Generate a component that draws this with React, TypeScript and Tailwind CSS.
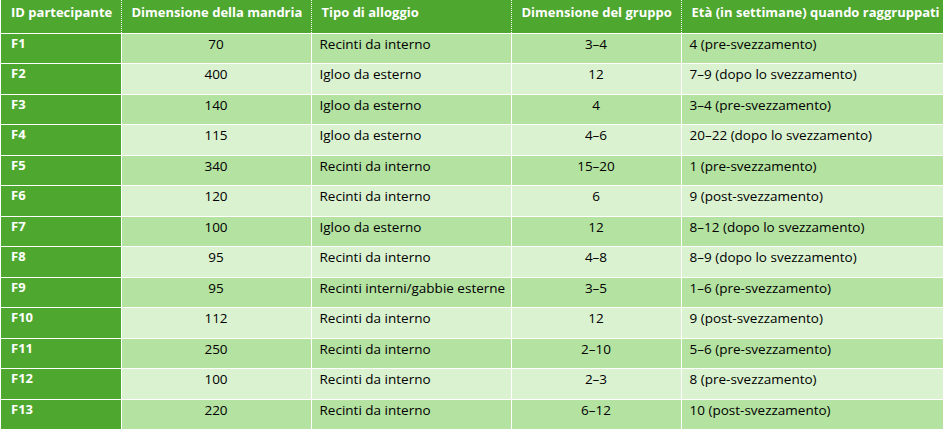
const rows = [
  ['F1', '70', 'Recinti da interno', '3–4', '4 (pre-svezzamento)'],
  ['F2', '400', 'Igloo da esterno', '12', '7–9 (dopo lo svezzamento)'],
  ['F3', '140', 'Igloo da esterno', '4', '3–4 (pre-svezzamento)'],
  ['F4', '115', 'Igloo da esterno', '4–6', '20–22 (dopo lo svezzamento)'],
  ['F5', '340', 'Recinti da interno', '15–20', '1 (pre-svezzamento)'],
  ['F6', '120', 'Recinti da interno', '6', '9 (post-svezzamento)'],
  ['F7', '100', 'Igloo da esterno', '12', '8–12 (dopo lo svezzamento)'],
  ['F8', '95', 'Recinti da interno', '4–8', '8–9 (dopo lo svezzamento)'],
  ['F9', '95', 'Recinti interni/gabbie esterne', '3–5', '1–6 (pre-svezzamento)'],
  ['F10', '112', 'Recinti da interno', '12', '9 (post-svezzamento)'],
  ['F11', '250', 'Recinti da interno', '2–10', '5–6 (pre-svezzamento)'],
  ['F12', '100', 'Recinti da interno', '2–3', '8 (pre-svezzamento)'],
  ['F13', '220', 'Recinti da interno', '6–12', '10 (post-svezzamento)'],
]

const headers = [
  'ID partecipante',
  'Dimensione della mandria',
  'Tipo di alloggio',
  'Dimensione del gruppo',
  'Età (in settimane) quando raggruppati',
]

export default function App() {
  return (
    <div className="h-[433px] w-[948px] bg-white pl-px font-['Open_Sans',sans-serif] text-[13.5px]">
      <table className="w-[942px] table-fixed border-collapse">
        <colgroup>
          <col className="w-[120px]" />
          <col className="w-[190px]" />
          <col className="w-[200px]" />
          <col className="w-[170px]" />
          <col className="w-[262px]" />
        </colgroup>
        <thead>
          <tr className="h-[33px] border-b border-white bg-[#4ea72e] text-white">
            {headers.map((h, i) => (
              <th
                key={h}
                className={`whitespace-nowrap px-[10px] pb-[8px] pt-0 align-middle text-[13px] font-bold leading-none ${
                  i === 1 || i === 3 ? 'text-center' : 'text-left'
                } ${i < 4 ? 'border-r border-dotted border-white' : ''}`}
              >
                {h}
              </th>
            ))}
          </tr>
        </thead>
        <tbody>
          {rows.map((r, ri) => (
            <tr
              key={r[0]}
              className={`h-[30.5px] whitespace-nowrap border-b border-white ${ri % 2 === 0 ? 'bg-[#b4e2a0]' : 'bg-[#daf2d0]'}`}
            >
              <td className="border-r border-white bg-[#4ea72e] px-[10px] pt-0 align-top text-[13px] font-bold text-white">
                {r[0]}
              </td>
              <td className="border-r border-white px-2 pt-0 text-center align-top text-black">{r[1]}</td>
              <td className="border-r border-white px-2 pt-0 align-top text-black">{r[2]}</td>
              <td className="border-r border-white px-2 pt-0 text-center align-top text-black">{r[3]}</td>
              <td className="px-2 pt-0 align-top text-black">{r[4]}</td>
            </tr>
          ))}
        </tbody>
      </table>
    </div>
  )
}
